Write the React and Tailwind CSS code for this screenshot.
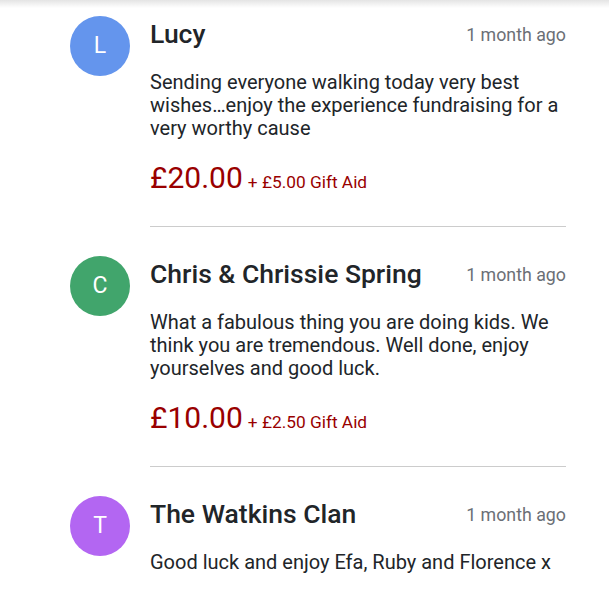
import React from "react";

const items = [
  {
    initial: "L",
    color: "bg-[#6495ed]",
    name: "Lucy",
    time: "1 month ago",
    message:
      "Sending everyone walking today very best wishes…enjoy the experience fundraising for a very worthy cause",
    amount: "£20.00",
    gift: "+ £5.00 Gift Aid",
  },
  {
    initial: "C",
    color: "bg-[#41a56c]",
    name: "Chris & Chrissie Spring",
    time: "1 month ago",
    message:
      "What a fabulous thing you are doing kids. We think you are tremendous. Well done, enjoy yourselves and good luck.",
    amount: "£10.00",
    gift: "+ £2.50 Gift Aid",
  },
  {
    initial: "T",
    color: "bg-[#b366f2]",
    name: "The Watkins Clan",
    time: "1 month ago",
    message: "Good luck and enjoy Efa, Ruby and Florence x",
  },
];

export default function App() {
  return (
    <div
      className="relative w-[609px] h-[589px] overflow-hidden bg-white"
      style={{ fontFamily: "Roboto, 'Liberation Sans', sans-serif" }}
    >
      <div className="absolute top-0 left-0 right-0 h-[8px] bg-gradient-to-b from-[#e4e4e4] to-transparent pointer-events-none" />
      <div className="pl-[70px] pr-[43px]">
        {items.map((it, i) => (
          <div key={i} className={`flex gap-5 ${i === 0 ? "pt-4" : "pt-[29px]"}`}>
            <div
              className={`w-[60px] h-[60px] shrink-0 rounded-full ${it.color} flex items-center justify-center text-white text-[23px]`}
            >
              {it.initial}
            </div>
            <div className="flex-1 min-w-0">
              <div className="flex items-start justify-between">
                <div className="text-[26.5px] leading-[36px] font-medium text-[#212529]">
                  {it.name}
                </div>
                <div className="mt-[9px] text-[17.8px] leading-[20px] text-[#6b6f76]">{it.time}</div>
              </div>
              <p className="mt-[19px] text-[20px] leading-[23px] text-[#212529]">{it.message}</p>
              {it.amount && (
                <div className="mt-5 flex items-baseline text-[#990000]">
                  <span className="text-[30px] leading-[36px]">{it.amount}</span>
                  <span className="ml-[5px] text-[17.3px]">{it.gift}</span>
                </div>
              )}
              {it.amount && <div className="mt-[30px] h-px bg-[#cccccc]" />}
            </div>
          </div>
        ))}
      </div>
    </div>
  );
}
